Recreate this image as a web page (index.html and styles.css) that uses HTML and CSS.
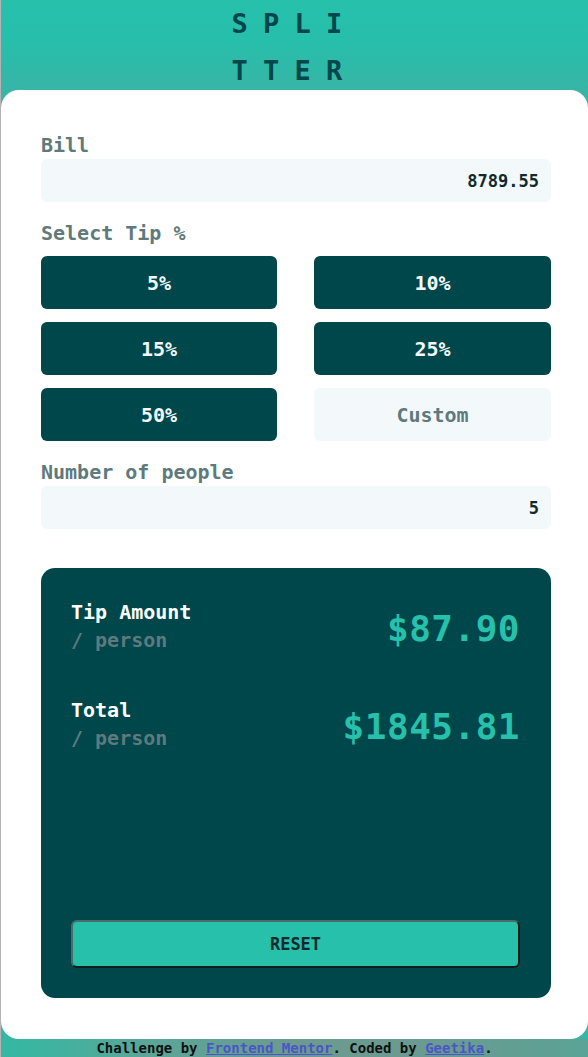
FILE: index.html
```html
<!DOCTYPE html>
<html lang="en">
<head>
<meta charset="utf-8">
<title>Splitter</title>
<link rel="stylesheet" href="styles.css">
</head>
<body>
  <header class="top">
    <h1 class="logo">SPLITTER</h1>
  </header>
  <main class="card">
    <label class="label">Bill</label>
    <div class="field">8789.55</div>

    <label class="label label-tip">Select Tip %</label>
    <div class="tips">
      <button class="tip">5%</button>
      <button class="tip">10%</button>
      <button class="tip">15%</button>
      <button class="tip">25%</button>
      <button class="tip">50%</button>
      <button class="tip tip-custom">Custom</button>
    </div>

    <label class="label label-people">Number of people</label>
    <div class="field">5</div>

    <section class="result">
      <div class="row">
        <div class="row-text">
          <div class="row-title">Tip Amount</div>
          <div class="row-sub">/ person</div>
        </div>
        <div class="amount">$87.90</div>
      </div>
      <div class="row row-total">
        <div class="row-text">
          <div class="row-title">Total</div>
          <div class="row-sub">/ person</div>
        </div>
        <div class="amount">$1845.81</div>
      </div>
      <button class="reset">RESET</button>
    </section>
  </main>
  <footer class="footer">
    Challenge by <a href="#">Frontend Mentor</a>. Coded by <a href="#">Geetika</a>.
  </footer>
</body>
</html>
```
FILE: styles.css
```css
html, body {
  margin: 0;
  padding: 0;
}
body {
  font-family: "DejaVu Sans Mono", "Liberation Mono", monospace;
  font-weight: bold;
  border-left: 1px solid #b4b4b4;
  background: linear-gradient(to bottom, #26c0ab 0, #27bfab 40px, #37b5a6 90px, #37b5a6 100%);
  min-height: 1057px;
  box-sizing: border-box;
}
.top {
  height: 90px;
}
.logo {
  margin: 0 auto;
  width: 140px;
  text-align: center;
  font-size: 27px;
  line-height: 47px;
  letter-spacing: 15.2px;
  word-break: break-all;
  color: #00474b;
  font-weight: bold;
}
.card {
  display: block;
  background: #fff;
  border-radius: 18px;
  padding: 43px 37px 41px 40px;
}
.label {
  display: block;
  font-size: 20px;
  line-height: 24px;
  color: #5e7a7d;
  margin-bottom: 2px;
}
.label-tip {
  margin-top: 19px;
  margin-bottom: 11px;
}
.label-people {
  margin-top: 19px;
}
.field {
  height: 43px;
  background: #f3f8fb;
  border-radius: 6px;
  box-sizing: border-box;
  padding: 0 12px;
  display: flex;
  align-items: center;
  justify-content: flex-end;
  font-size: 17px;
  color: #102a2c;
}
.tips {
  display: grid;
  grid-template-columns: 236px 237px;
  column-gap: 37px;
  row-gap: 13px;
}
.tip {
  height: 53px;
  border: none;
  border-radius: 6px;
  background: #00474b;
  color: #f3f8fb;
  font-family: inherit;
  font-weight: bold;
  font-size: 20px;
  padding: 0;
}
.tip-custom {
  background: #f3f9fa;
  color: #5e7a7d;
}
.result {
  margin-top: 39px;
  height: 430px;
  box-sizing: border-box;
  background: #00474b;
  border-radius: 14px;
  padding: 30px 31px 30px 30px;
  display: flex;
  flex-direction: column;
}
.row {
  display: flex;
  justify-content: space-between;
  align-items: flex-start;
}
.row-total {
  margin-top: 42px;
}
.row-title {
  font-size: 20px;
  line-height: 28px;
  color: #ffffff;
}
.row-sub {
  font-size: 20px;
  line-height: 28px;
  color: #5e7a7d;
}
.amount {
  font-size: 36px;
  line-height: 36px;
  margin-top: 13px;
  color: #26c0ab;
  letter-spacing: 0.5px;
}
.reset {
  margin-top: auto;
  height: 48px;
  background: #26c0ab;
  border: 2px solid;
  border-color: #4a6b68 #141c1c #141c1c #4a6b68;
  border-radius: 6px;
  font-family: inherit;
  font-weight: bold;
  font-size: 17px;
  color: #0f2a2b;
  padding: 0;
}
.footer {
  height: 19px;
  font-size: 14px;
  line-height: 19px;
  text-align: center;
  color: #111;
  background: linear-gradient(to right, #33b8a3 0%, #5aa698 25%, #6c9a8f 50%, #6a9b90 75%, #5aa396 100%);
}
.footer a {
  color: #4a56c8;
  text-decoration: underline;
}
```
